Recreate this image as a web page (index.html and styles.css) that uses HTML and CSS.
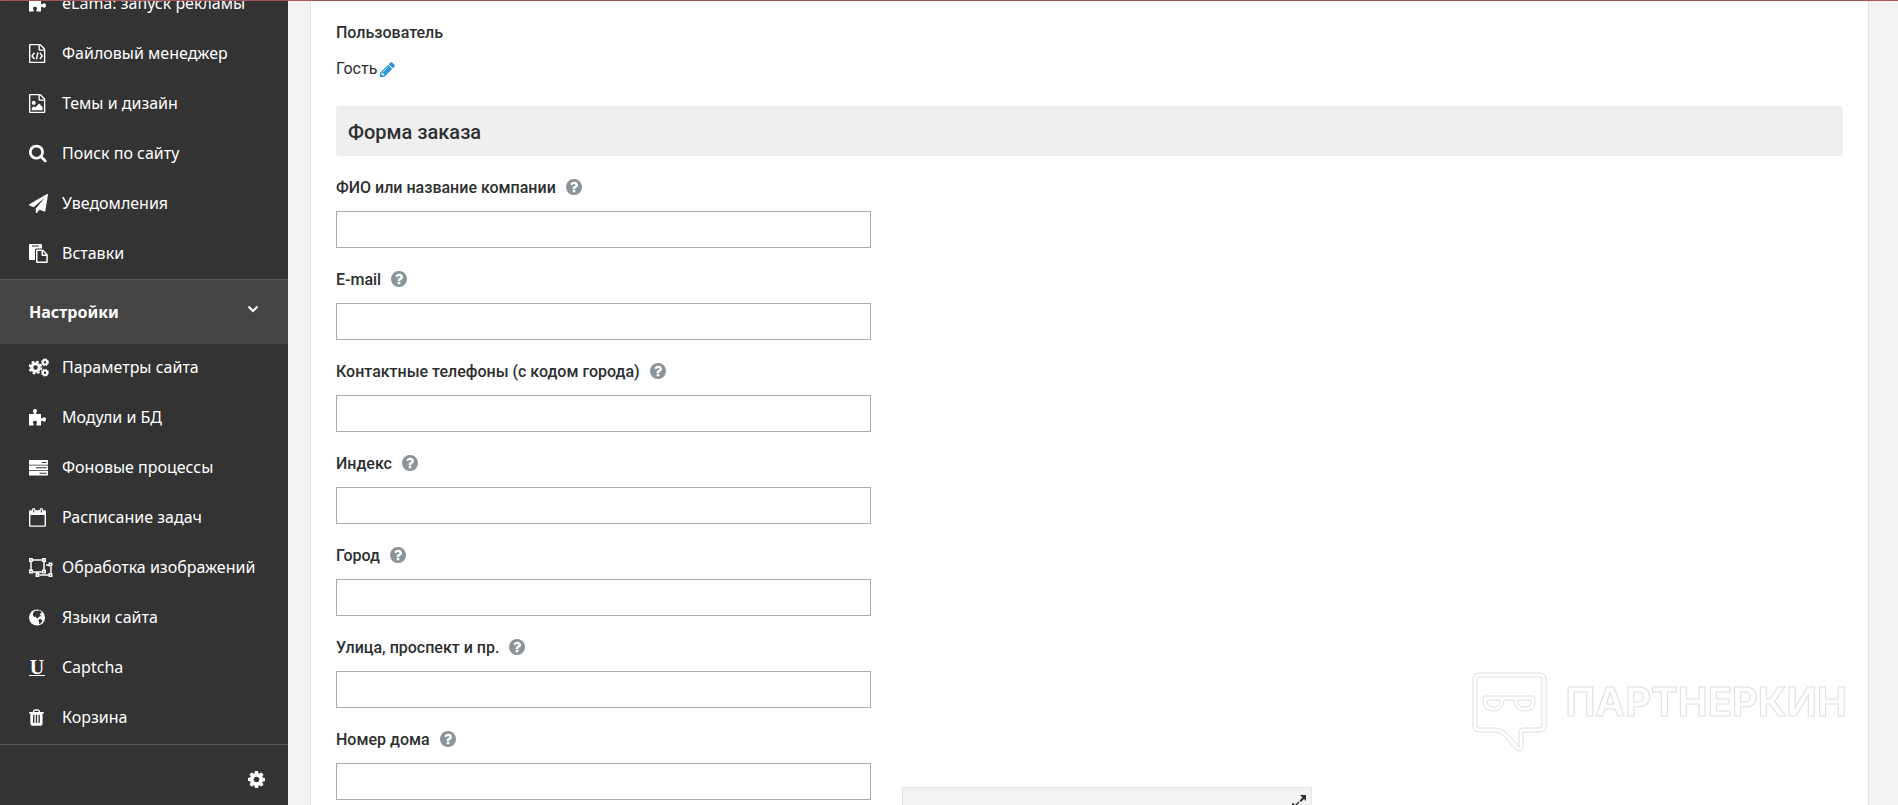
FILE: index.html
```html
<!DOCTYPE html>
<html lang="ru">
<head>
    <meta charset="UTF-8">
    <meta name="viewport" content="width=device-width, initial-scale=1.0">
    <title>Форма заказа</title>
    <link rel="stylesheet" href="styles.css">
</head>
<body>
    <svg class="sprite" aria-hidden="true">
        <symbol id="i-help" viewBox="128 128 1536 1536"><path d="M1024 1376v-192q0-14-9-23t-23-9h-192q-14 0-23 9t-9 23v192q0 14 9 23t23 9h192q14 0 23-9t9-23zm256-672q0-88-55.500-163t-138.500-116-170-41q-243 0-371 213-15 24 8 42l132 100q7 6 19 6 16 0 25-12 53-68 86-92 34-24 86-24 48 0 85.500 26t37.500 59q0 38-20 61t-68 45q-63 28-115.500 86.500t-52.500 125.500v36q0 14 9 23t23 9h192q14 0 23-9t9-23q0-19 21.500-49.500t54.500-49.500q32-18 49-28.500t46-35 44.500-48 28-60.500 12.500-81zm384 192q0 209-103 385.500t-279.500 279.500-385.500 103-385.500-103-279.500-279.500-103-385.500 103-385.500 279.500-279.500 385.500-103 385.500 103 279.500 279.500 103 385.500z"/></symbol>
        <symbol id="i-puzzle" viewBox="0 0 19 19"><path d="M0 6h4.500q.7-.4 0-1.500Q3.600 2.800 4.200 2 4.800 1 6 1t1.800 1q.6.800-.3 2.500-.7 1.100 0 1.500H12v3.700q.5.900 1.600.2 1.700-1 2.500-.3.900.6.900 1.900t-.9 1.900q-.8.700-2.500-.3-1.100-.7-1.600.2V17.500H7.800q-1-.4-.3-1.700.8-1.500.3-2.300Q7.200 12.700 6 12.700t-1.800.8q-.5.800.3 2.300.7 1.300-.3 1.700H0z"/></symbol>
    </svg>

    <div class="topline"></div>

    <aside class="sidebar">
        <ul class="menu menu-first">
            <li><a href="#"><svg class="icon"><use href="#i-puzzle"/></svg>eLama: запуск рекламы</a></li>
            <li><a href="#"><svg class="icon" viewBox="128 0 1792 1792"><path d="M1596 380q28 28 48 76t20 88v1152q0 40-28 68t-68 28h-1344q-40 0-68-28t-28-68v-1600q0-40 28-68t68-28h896q40 0 88 20t76 48zm-444-244v376h376q-10-29-22-41l-313-313q-12-12-41-22zm384 1528v-1024h-416q-40 0-68-28t-28-68v-416h-768v1536h1280z"/><path class="line" d="M640 830l-220 290 220 290M1152 830l220 290-220 290M965 780l-130 680"/></svg>Файловый менеджер</a></li>
            <li><a href="#"><svg class="icon" viewBox="128 0 1792 1792"><path d="M1596 380q28 28 48 76t20 88v1152q0 40-28 68t-68 28h-1344q-40 0-68-28t-28-68v-1600q0-40 28-68t68-28h896q40 0 88 20t76 48zm-444-244v376h376q-10-29-22-41l-313-313q-12-12-41-22zm384 1528v-1024h-416q-40 0-68-28t-28-68v-416h-768v1536h1280zm-128-448v320h-1024v-192l192-192 128 128 384-384zm-832-192q-80 0-136-56t-56-136 56-136 136-56 136 56 56 136-56 136-136 56z"/></svg>Темы и дизайн</a></li>
            <li><a href="#"><svg class="icon" viewBox="64 64 1792 1792"><path d="M1216 832q0-185-131.500-316.500t-316.500-131.500-316.500 131.500-131.500 316.500 131.500 316.500 316.500 131.500 316.500-131.500 131.500-316.500zm512 832q0 52-38 90t-90 38q-54 0-90-38l-343-342q-179 124-399 124-143 0-273.500-55.500t-225-150-150-225-55.500-273.500 55.500-273.500 150-225 225-150 273.500-55.500 273.500 55.500 225 150 150 225 55.500 273.500q0 220-124 399l343 343q37 37 37 90z"/></svg>Поиск по сайту</a></li>
            <li><a href="#"><svg class="icon" viewBox="0 0 1792 1792"><path d="M1764 11q33 24 27 64l-256 1536q-5 29-32 45-14 8-31 8-11 0-24-5l-453-185-242 295q-18 23-49 23-13 0-22-4-19-7-30.500-23.500t-11.500-36.500v-349l864-1059-1069 925-395-162q-37-14-40-55-2-40 32-59l1664-960q15-9 32-9 20 0 36 11z"/></svg>Уведомления</a></li>
            <li><a href="#"><svg class="icon" viewBox="0 0 19 19"><path fill-rule="evenodd" d="M1 0h11q1 0 1 1v3.500H7.500Q6 4.500 6 6v10H1q-1 0-1-1V1q0-1 1-1zM3 1.400v1.200h7V1.400zM8 5.500h6l4.800 5V18q0 1-1 1H8q-1 0-1-1V6.500q0-1 1-1zM8.500 7v10.500h8.800V12H13.500q-1 0-1-1V7zM14 7.500v3h2.800z"/></svg>Вставки</a></li>
        </ul>

        <button class="menu-title" type="button">
            Настройки
            <svg class="chevron" viewBox="0 0 12 8"><path d="M1.500 1.500L6 6l4.500-4.500"/></svg>
        </button>

        <ul class="menu menu-settings">
            <li><a href="#"><svg class="icon icon-cogs" viewBox="0 0 21 19">
                <circle class="ring" cx="6.500" cy="9.500" r="3.800"/><circle class="teeth" cx="6.500" cy="9.500" r="5.900" stroke-dasharray="2.600 2.030"/>
                <circle class="ring small" cx="16" cy="4.300" r="2.200"/><circle class="teeth small" cx="16" cy="4.300" r="3.500" stroke-dasharray="1.500 1.250"/>
                <circle class="ring small" cx="16" cy="14.700" r="2.200"/><circle class="teeth small" cx="16" cy="14.700" r="3.500" stroke-dasharray="1.500 1.250"/>
            </svg>Параметры сайта</a></li>
            <li><a href="#"><svg class="icon"><use href="#i-puzzle"/></svg>Модули и БД</a></li>
            <li><a href="#"><svg class="icon" viewBox="0 0 19 19"><path fill-rule="evenodd" d="M.5 2h18q.5 0 .5.500v3.800q0 .5-.5.500H.5q-.5 0-.5-.5V2.500Q0 2 .5 2zM13 4v1h4.500V4zM.5 7.500h18q.5 0 .5.500v3.500q0 .5-.5.500H.5q-.5 0-.5-.5V8q0-.5.500-.5zM7 9.200v1h10.500v-1zM.5 12.700h18q.5 0 .5.500V17q0 .5-.5.500H.5Q0 17.500 0 17v-3.800q0-.5.500-.5zM10.500 14.700v1h7v-1z"/></svg>Фоновые процессы</a></li>
            <li><a href="#"><svg class="icon" viewBox="0 0 19 19"><path fill-rule="evenodd" d="M1.300 2.200H3V1.800Q3 0 4.700 0t1.700 1.800v.4h4.200v-.4Q10.600 0 12.300 0T14 1.800v.4h1.700q1.300 0 1.300 1.300v14q0 1.300-1.300 1.300H1.300Q0 18.800 0 17.500v-14q0-1.300 1.300-1.300zM1.400 7v10.400h14.200V7zM4.200 1.500v3h1v-3zM11.800 1.500v3h1v-3z"/></svg>Расписание задач</a></li>
            <li><a href="#"><svg class="icon icon-group" viewBox="0 0 24 19"><path class="frame" d="M4 2h9M2 4v8M4 14h9M15 4v8M17 7h3M22 9v6M10.500 17H20M8.500 16v-2"/><path class="frame" d="M.8.800h2.400v2.400H.8zM13.800.8h2.400v2.400h-2.400zM.8 12.300h2.400v2.400H.8zM13.800 12.300h2.400v2.400h-2.400zM20.300 5.300h2.400v2.400h-2.400zM20.300 15.800h2.400v2.400h-2.400zM7.300 15.800h2.400v2.400H7.300z"/></svg>Обработка изображений</a></li>
            <li><a href="#"><svg class="icon" viewBox="0 0 19 19"><circle cx="8" cy="9.500" r="8"/><path class="land" d="M5 3.500l2-1 1.500.5 1.500-.8 2 1 .8 1.600-1.300.4-.7 1.300 1.200.6-.8 1.400-1.500.3-.8 1.800-1.300-.5-.9-1.300-1.400.1-1.500-1.700.2-1.600zM9.800 11.500l1.700-.5 2 1.300-.6 1.800-2 2-1 .2.400-2.100-1-1.300z"/></svg>Языки сайта</a></li>
            <li><a href="#"><span class="icon icon-u">U</span>Captcha</a></li>
            <li><a href="#"><svg class="icon" viewBox="192 0 1792 1792"><path d="M704 1376v-704q0-14-9-23t-23-9h-64q-14 0-23 9t-9 23v704q0 14 9 23t23 9h64q14 0 23-9t9-23zm256 0v-704q0-14-9-23t-23-9h-64q-14 0-23 9t-9 23v704q0 14 9 23t23 9h64q14 0 23-9t9-23zm256 0v-704q0-14-9-23t-23-9h-64q-14 0-23 9t-9 23v704q0 14 9 23t23 9h64q14 0 23-9t9-23zm-544-992h448l-48-117q-7-9-17-11h-317q-10 2-17 11zm928 32v64q0 14-9 23t-23 9h-96v948q0 83-47 143.500t-113 60.500h-832q-66 0-113-58.500t-47-141.500v-952h-96q-14 0-23-9t-9-23v-64q0-14 9-23t23-9h309l70-167q15-37 54-63t79-26h320q40 0 79 26t54 63l70 167h309q14 0 23 9t9 23z"/></svg>Корзина</a></li>
        </ul>

        <div class="sidebar-bottom">
            <button class="icon-btn" type="button" aria-label="Настройки меню">
                <svg viewBox="128 128 1536 1536"><path d="M1152 896q0-106-75-181t-181-75-181 75-75 181 75 181 181 75 181-75 75-181zm512-109v222q0 12-8 23t-20 13l-185 28q-19 54-39 91 35 50 107 138 10 12 10 25t-9 23q-27 37-99 108t-94 71q-12 0-26-9l-138-108q-44 23-91 38-16 136-29 186-7 28-36 28h-222q-14 0-24.500-8.500t-11.500-21.500l-28-184q-49-16-90-37l-141 107q-10 9-25 9-14 0-25-11-126-114-165-168-7-10-7-23 0-12 8-23 15-21 51-66.500t54-70.500q-27-50-41-99l-183-27q-13-2-21-12.500t-8-23.500v-222q0-12 8-23t19-13l186-28q14-46 39-92-40-57-107-138-10-12-10-24 0-10 9-23 26-36 98.500-107.500t94.500-71.500q13 0 26 10l138 107q44-23 91-38 16-136 29-186 7-28 36-28h222q14 0 24.500 8.500t11.500 21.500l28 184q49 16 90 37l142-107q9-9 24-9 13 0 25 10 129 119 165 170 7 8 7 22 0 12-8 23-15 21-51 66.500t-54 70.500q26 50 41 98l183 28q13 2 21 12.500t8 23.500z"/></svg>
            </button>
        </div>
    </aside>

    <main class="content">
        <form class="card">
            <div class="user-title">Пользователь</div>
            <div class="user">
                Гость
                <a href="#" aria-label="Изменить"><svg viewBox="128 128 1536 1536"><path d="M491 1536l91-91-235-235-91 91v107h128v128h107zm523-928q0-22-22-22-10 0-17 7l-542 542q-7 7-7 17 0 22 22 22 10 0 17-7l542-542q7-7 7-17zm-54-192l416 416-832 832h-416v-416zm683 96q0 53-37 90l-166 166-416-416 166-165q36-38 90-38 53 0 91 38l235 234q37 39 37 91z"/></svg></a>
            </div>

            <h2>Форма заказа</h2>

            <div class="field">
                <div class="label-row"><label for="name">ФИО или название компании</label><svg class="help"><use href="#i-help"/></svg></div>
                <input type="text" id="name">
            </div>
            <div class="field">
                <div class="label-row"><label for="email">E-mail</label><svg class="help"><use href="#i-help"/></svg></div>
                <input type="text" id="email">
            </div>
            <div class="field">
                <div class="label-row"><label for="phone">Контактные телефоны (с кодом города)</label><svg class="help"><use href="#i-help"/></svg></div>
                <input type="text" id="phone">
            </div>
            <div class="field">
                <div class="label-row"><label for="zip">Индекс</label><svg class="help"><use href="#i-help"/></svg></div>
                <input type="text" id="zip">
            </div>
            <div class="field">
                <div class="label-row"><label for="city">Город</label><svg class="help"><use href="#i-help"/></svg></div>
                <input type="text" id="city">
            </div>
            <div class="field">
                <div class="label-row"><label for="street">Улица, проспект и пр.</label><svg class="help"><use href="#i-help"/></svg></div>
                <input type="text" id="street">
            </div>
            <div class="field">
                <div class="label-row"><label for="house">Номер дома</label><svg class="help"><use href="#i-help"/></svg></div>
                <input type="text" id="house">
            </div>
        </form>
    </main>

    <div class="panel">
        <button class="expand" type="button" aria-label="Развернуть">
            <svg viewBox="0 0 14 14"><path d="M8 0h6v6l-2-2-3 3-1.500-1.500 3-3zM6.500 6.500l1 1L4 11l2 2v1H0V8h1l2 2z"/></svg>
        </button>
    </div>

    <div class="brand">
        <svg viewBox="0 0 76 82">
            <path d="M8 1h60q6 0 6 6v47q0 6-6 6H51v15q0 4-4 4-2 0-4-2Q31 61 25 60H8q-7 0-7-6V7q0-6 7-6z"/>
            <path d="M7 5h61q2 0 2 2v47q0 2-2 2H51q-4 0-4 4v15Q34 57 25 56H7q-2 0-2-2V7q0-2 2-2z"/>
            <path d="M13 24h48q2 0 2 2v4q0 9-11 9-9 0-10-11H32q-1 11-10 11-11 0-11-9v-4q0-2 2-2z"/>
            <path d="M16 28h12v3q0 4-6 4t-7-4v-2zM46 28h13v3q0 4-6 4t-7-4z"/>
        </svg>
        <span>ПАРТНЕРКИН</span>
    </div>
</body>
</html>
```
FILE: styles.css
```css
* {
    box-sizing: border-box;
}
body {
    display: flex;
    height: 100vh;
    margin: 0;
    overflow: hidden;
    background: #f4f2f3;
    color: #2d2f31;
    font-family: Roboto, sans-serif;
    font-size: 16px;
}
button {
    border: none;
    padding: 0;
    background: none;
    color: inherit;
    font: inherit;
    cursor: pointer;
}
svg {
    display: block;
    fill: currentColor;
}
.sprite {
    position: absolute;
    width: 0;
    height: 0;
}
.topline {
    position: fixed;
    top: 0;
    left: 0;
    right: 0;
    height: 1px;
    background: #a0565a;
    box-shadow: 0 0 8px rgba(255, 0, 30, 0.1);
    z-index: 10;
}

/* sidebar */
.sidebar {
    flex: 0 0 288px;
    background: #333;
    color: #fff;
    font-family: "Noto Sans", sans-serif;
}
.menu {
    list-style: none;
    margin: 0;
    padding: 0;
}
.menu-first {
    margin-top: -21px;
}
.menu-settings {
    margin-top: -1px;
    padding-bottom: 1px;
}
.menu a {
    display: flex;
    align-items: center;
    height: 50px;
    padding: 0 0 2px 29px;
    color: #fff;
    text-decoration: none;
    white-space: nowrap;
}
.icon {
    flex: none;
    width: 19px;
    height: 19px;
    margin-right: 14px;
}
.icon-cogs {
    width: 21px;
    margin-right: 12px;
}
.icon-group {
    width: 24px;
    margin-right: 9px;
}
.icon .line {
    fill: none;
    stroke: #fff;
    stroke-width: 140;
}
.icon .ring {
    fill: none;
    stroke: #fff;
    stroke-width: 3;
}
.icon .teeth {
    fill: none;
    stroke: #fff;
    stroke-width: 2;
}
.icon .small {
    stroke-width: 2;
}
.icon .teeth.small {
    stroke-width: 1;
}
.icon .frame {
    fill: none;
    stroke: #fff;
    stroke-width: 1.5;
}
.icon .land {
    fill: #333;
}
.icon-u {
    width: 16px;
    height: 17px;
    margin-right: 17px;
    border-bottom: 1px solid #fff;
    font: bold 20px/16px "Liberation Serif", serif;
    text-align: center;
}
.menu-title {
    display: flex;
    align-items: center;
    justify-content: space-between;
    width: 100%;
    height: 65px;
    padding: 0 29px;
    border-top: 1px solid #5a5a5a;
    background: #444;
    font-weight: bold;
}
.chevron {
    width: 12px;
    height: 8px;
    margin-bottom: 6px;
    fill: none;
    stroke: #fff;
    stroke-width: 2;
}
.sidebar-bottom {
    display: flex;
    justify-content: flex-end;
    padding: 26px 23px;
    border-top: 1px solid #5a5a5a;
}
.icon-btn svg {
    width: 17px;
    height: 17px;
}

/* order form */
.content {
    flex: 1;
    padding: 0 29px 0 22px;
}
.card {
    min-height: 100%;
    padding: 21px 25px;
    border: 1px solid #e4e2e3;
    border-width: 0 1px;
    background: #fff;
}
.user-title {
    line-height: 24px;
    font-weight: 500;
}
.user {
    display: flex;
    align-items: center;
    gap: 3px;
    margin-top: 12px;
    line-height: 24px;
}
.user svg {
    width: 15px;
    height: 15px;
    color: #2a94d8;
}
h2 {
    margin: 25px 0 20px;
    padding: 2px 12px 0;
    border-radius: 4px;
    background: #efefef;
    font-size: 20px;
    font-weight: 500;
    line-height: 48px;
}
.field {
    width: 36%;
    max-width: 535px;
    margin-bottom: 20px;
}
.label-row {
    display: flex;
    align-items: center;
    gap: 10px;
    height: 22px;
    margin-bottom: 13px;
    font-weight: 500;
    white-space: nowrap;
}
.help {
    width: 16px;
    height: 16px;
    color: #8b9599;
}
.field input {
    display: block;
    width: 100%;
    height: 37px;
    padding: 0 10px;
    border: 1px solid #a9adaf;
    background: #fff;
    font: inherit;
}

/* floating panel at the bottom edge */
.panel {
    position: fixed;
    right: 586px;
    bottom: 0;
    display: flex;
    justify-content: flex-end;
    width: 410px;
    height: 18px;
    padding: 7px 5px 0 0;
    border: 1px solid #e4e4e4;
    border-bottom: none;
    background: #f4f2f3;
    overflow: hidden;
}
.expand {
    align-self: flex-start;
}
.expand svg {
    width: 14px;
    height: 14px;
}

/* outlined logo */
.brand {
    position: fixed;
    right: 51px;
    bottom: 51px;
    display: flex;
    gap: 17px;
    color: #fff;
}
.brand svg {
    width: 76px;
    height: 82px;
    fill: none;
    stroke: #dedede;
}
.brand span {
    font: 700 40px/60px Inter, sans-serif;
    -webkit-text-stroke: 1px #dedede;
}
```
